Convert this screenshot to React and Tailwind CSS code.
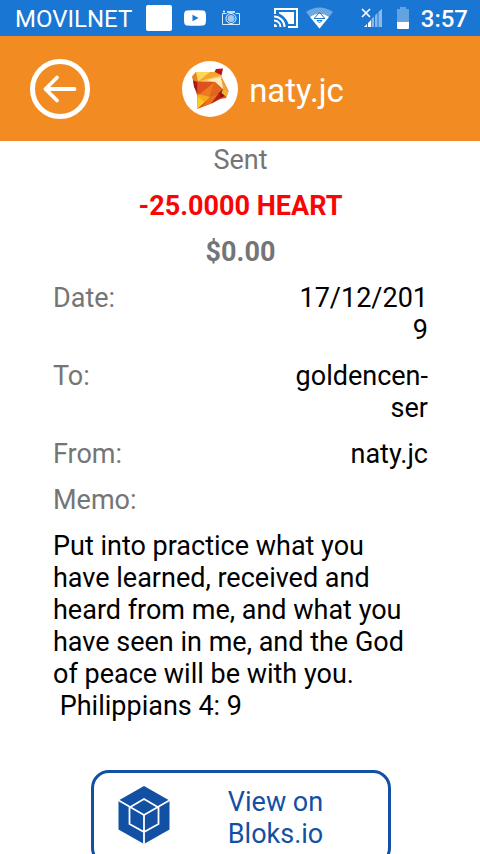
import React from "react";

function StatusBar() {
  return (
    <div className="flex h-9 shrink-0 items-center bg-[#1976d2] pl-[15px] pr-3 text-white">
      <span className="pt-0.5 text-2xl leading-8">MOVILNET</span>
      <span className="ml-3.5 size-[26px] rounded-xs bg-white" />
      <svg className="ml-3 h-4 w-[22px]" viewBox="0 0 22 16" aria-hidden="true">
        <path
          fill="#fff"
          fillRule="evenodd"
          d="M3 .6C8 0 14 0 19 .6c2 .2 2.600 1.400 2.800 3 .3 3 .3 5.800 0 8.800-.2 1.600-.8 2.800-2.800 3-5 .6-11 .6-16 0-2-.2-2.600-1.400-2.800-3-.3-3-.3-5.800 0-8.800C.4 2 1 .8 3 .6ZM8.500 4.800v6.400l6-3.200Z"
        />
      </svg>
      <svg className="ml-4 h-4 w-[18px]" viewBox="0 0 18 16" fill="none" stroke="#fff" aria-hidden="true">
        <path d="M4.500 3.500h-4v11h17v-11h-4" strokeOpacity=".85" />
        <path d="M5 2h8M1 1.500h2" strokeWidth="1.500" />
        <circle cx="9" cy="8.500" r="5" strokeOpacity=".9" />
        <circle cx="9" cy="8.500" r="3.500" fill="#fff" fillOpacity=".6" stroke="none" />
      </svg>
      <svg className="ml-auto h-5 w-6" viewBox="0 0 24 20" fill="none" stroke="#fff" aria-hidden="true">
        <path d="M1 6V1h22v18h-9" strokeWidth="2" />
        <path d="M5 5.500V4h15v12h-5.500C13 11 9.500 7.500 5 5.500Z" fill="#fff" stroke="none" />
        <path d="M0 8.500A10.500 10.500 0 0 1 10.500 19M0 12.500A6.500 6.500 0 0 1 6.500 19" strokeWidth="2" />
        <path d="M0 16a3 3 0 0 1 3 3H0Z" fill="#fff" stroke="none" />
      </svg>
      <svg className="ml-2 h-[22px] w-[27px]" viewBox="0 0 27 22" aria-hidden="true">
        <path fill="#6ca7e2" d="M0 5C8-1 19-1 27 5L13.500 21.500Z" />
        <path fill="#fff" d="M4 10c6-4.500 13-4.500 19 0l-9.500 11.500Z" />
        <path d="M8.500 11 13.500 5.500 18.500 11M8 11.500h11M11 13.500l2.500 2.500 2.500-2.500Z" fill="none" stroke="#1976d2" />
      </svg>
      <svg className="ml-7 h-5 w-[22px]" viewBox="0 0 22 20" aria-hidden="true">
        <path d="m1 1 8 8M9 1 1 9" stroke="#fff" strokeWidth="1.700" />
        <path fill="#8bbae8" d="M10.500 11 13 8.500V19h-2.500ZM14 7.500 16.500 5v14H14ZM17.500 4 21 .8V19h-3.500Z" />
        <path fill="#fff" d="m3 19 3-3v3ZM7 15l3-3v7H7Z" />
      </svg>
      <svg className="ml-3.5 h-[22px] w-3" viewBox="0 0 12 22" aria-hidden="true">
        <path fill="#64a2e0" d="M3 0h6v2h3v13H0V2h3Z" />
        <path fill="#fff" d="M0 15h12v6a1 1 0 0 1-1 1H1a1 1 0 0 1-1-1Z" />
      </svg>
      <span className="ml-3 pt-0.5 text-2xl leading-8 font-medium">3:57</span>
    </div>
  );
}

function AccountLogo() {
  return (
    <svg className="size-14" viewBox="0 0 56 56" aria-hidden="true">
      <circle cx="28" cy="28" r="28" fill="#fff" />
      <path fill="#d9521c" d="m14 11 20 0 5 4 7.500 15-2.500 7-5.500 1L28 43l-13 5V34l-4-14-.5-5Z" />
      <path fill="#b9151b" d="m32 12 2-4 7-.5-1.500 7Z" />
      <path fill="#e9851f" d="m14 11-4 5 1.500 4 4 1Z" />
      <path fill="#a81c18" d="m11 19.500 4.500 1.500v12l-3.500-7Z" />
      <path fill="#f2a72a" d="M14 11h19l6 3 1 4-24 3Z" />
      <path fill="#ffd45c" d="M14 11h14L16 20.500Z" />
      <path fill="#f9c060" d="m16 20.500 23-6.500 1 3-10 5Z" />
      <path fill="#ffe9b4" d="m24 19 15-3 3 13-9-8Z" />
      <path fill="#f3a03a" d="m39 15 7.500 15-5-1Z" />
      <path fill="#e0501c" d="m15.500 20.500 17 .5-17 15Z" />
      <path fill="#ee7b20" d="m32.500 21-17 14 12 1Z" />
      <path fill="#e6651d" d="m32.500 21 9 8-14 7Z" />
      <path fill="#f9a91d" d="m15.500 33 13 3-13.500 12Z" />
      <path fill="#fdcb1d" d="m15.500 35 7 6-7.500 7Z" />
      <path fill="#e8741d" d="m28 35.500 9-3-9 10.500-8 3Z" />
      <path fill="#b3231a" d="m37 32 1.500 5-9.500 6Z" />
      <path fill="#8e1519" d="m37 32 4-4 1.500 7-4 2Z" />
      <path fill="#f4b22b" d="m41 28 5.500 2-2 6-5-4Z" />
    </svg>
  );
}

function Header() {
  return (
    <header className="relative flex h-[105px] shrink-0 items-center justify-center bg-[#f28c22]">
      <button type="button" aria-label="Back" className="absolute left-[30px]">
        <svg className="size-[60px]" viewBox="0 0 60 60" fill="none" stroke="#fff" strokeLinecap="round" strokeLinejoin="round" aria-hidden="true">
          <circle cx="30" cy="30" r="27.500" strokeWidth="5" />
          <path d="M44.500 30H15.500M27 18.500 15.500 30 27 41.500" strokeWidth="3.800" />
        </svg>
      </button>
      <div className="flex items-center gap-[11px] pl-[46px]">
        <AccountLogo />
        <h1 className="pt-1 text-[33px] leading-10 text-white">naty.jc</h1>
      </div>
    </header>
  );
}

function Detail({ label, children }) {
  return (
    <div className="flex justify-between">
      <dt className="text-[#757575]">{label}</dt>
      <dd className="w-[138px] text-right break-all">{children}</dd>
    </div>
  );
}

function BloksLogo() {
  return (
    <svg className="h-[58px] w-[52px] shrink-0" viewBox="0 0 52 58" aria-hidden="true">
      <path fill="#1250a4" d="M26 0 51.500 14.500v29L26 58 .5 43.500v-29Z" />
      <path
        fill="none"
        stroke="#fff"
        strokeWidth="1.800"
        d="m0 14 26 15L52 14M26 29v29M26 13 40.500 21.500v16.500L26 46 11.500 38V21.500Z"
      />
    </svg>
  );
}

export default function App() {
  return (
    <div className="flex h-screen flex-col overflow-hidden bg-white font-[Roboto,sans-serif] text-black">
      <StatusBar />
      <Header />
      <main className="min-h-0 flex-1 overflow-y-auto pt-[3px] pr-[52px] pl-[53px] text-[27px] leading-8 [scrollbar-width:none]">
        <div className="flex flex-col gap-3.5">
          <p className="text-center text-[#757575]">Sent</p>
          <p className="text-center font-bold text-[#fa0505]">-25.0000 HEART</p>
          <p className="text-center font-bold text-[#757575]">$0.00</p>
          <dl className="flex flex-col gap-3.5">
            <Detail label="Date:">17/12/2019</Detail>
            <Detail label="To:">
              goldencen-
              <br />
              ser
            </Detail>
            <Detail label="From:">naty.jc</Detail>
            <div className="flex flex-col gap-3.5">
              <dt className="text-[#757575]">Memo:</dt>
              <dd className="pr-3 whitespace-pre-wrap">
                {"Put into practice what you have learned, received and heard from me, and what you have seen in me, and the God of peace will be with you.\n Philippians 4: 9"}
              </dd>
            </div>
          </dl>
        </div>
        <button
          type="button"
          className="mx-auto mt-12 mb-6 flex w-[300px] items-start rounded-[18px] border-3 border-[#1250a4] py-[13px] pr-8 pl-6 text-[#1250a4]"
        >
          <BloksLogo />
          <span className="flex-1 pl-[26px] text-center">
            View on
            <br />
            Bloks.io
          </span>
        </button>
      </main>
    </div>
  );
}
